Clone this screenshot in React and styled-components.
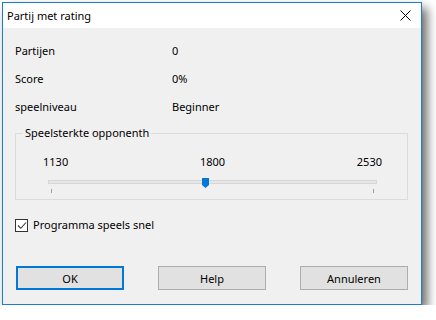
import styled, { createGlobalStyle } from 'styled-components';

const GlobalStyle = createGlobalStyle`
  html, body {
    margin: 0;
    padding: 0;
    background: #ffffff;
  }
  body {
    font-family: "Noto Sans", "Open Sans", sans-serif;
    font-size: 11px;
    color: #000000;
  }
`;

const Page = styled.div`
  padding: 2px 0 0 2px;
`;

const Window = styled.div`
  width: 418px;
  height: 301px;
  border: 1px solid #1a7fd4;
  background: #f0f0f0;
  display: flex;
  flex-direction: column;
  box-shadow: 5px 6px 10px rgba(0, 0, 0, 0.6);
`;

const TitleBar = styled.div`
  height: 25px;
  background: #ffffff;
  display: flex;
  align-items: center;
  justify-content: space-between;
  padding: 0 0 0 4px;
`;

const Title = styled.span`
  font-size: 11px;
  color: #000000;
`;

const CloseButton = styled.div`
  width: 32px;
  height: 25px;
  display: flex;
  align-items: center;
  justify-content: center;
`;

const Body = styled.div`
  flex: 1;
  padding: 8px 13px 14px 12px;
  display: flex;
  flex-direction: column;
`;

const InfoRow = styled.div`
  display: grid;
  grid-template-columns: 157px 1fr;
  height: 28px;
  align-items: center;
`;

const Group = styled.fieldset`
  margin: 5px 0 0 0;
  padding: 0 0 5px 0;
  border: 1px solid #dcdcdc;
`;

const Legend = styled.legend`
  margin-left: 7px;
  padding: 0 2px;
  line-height: 16px;
`;

const ScaleLabels = styled.div`
  display: flex;
  justify-content: space-between;
  padding: 13px 25px 0 27px;
  line-height: 16px;
`;

const SliderArea = styled.div`
  position: relative;
  margin: 10px 30px 0 32px;
  height: 14px;
`;

const Track = styled.div`
  height: 2px;
  border: 1px solid #d6d6d6;
  background: #e7e7e7;
`;

const Thumb = styled.svg`
  position: absolute;
  top: -2px;
  margin-left: -4px;
`;

const Tick = styled.div`
  position: absolute;
  top: 9px;
  width: 1px;
  height: 4px;
  background: #a0a0a0;
`;

const CheckRow = styled.label`
  display: flex;
  align-items: center;
  gap: 5px;
  margin-top: 17px;
  line-height: 16px;
`;

const CheckBox = styled.span`
  width: 11px;
  height: 11px;
  border: 1px solid #333333;
  background: #ffffff;
  display: flex;
  align-items: center;
  justify-content: center;
`;

const ButtonRow = styled.div`
  margin-top: auto;
  display: flex;
  justify-content: space-between;
  padding-left: 1px;
`;

const Button = styled.div`
  width: 108px;
  height: 24px;
  box-sizing: border-box;
  background: #e1e1e1;
  border: ${(p) => (p.$default ? '2px solid #0078d7' : '1px solid #adadad')};
  display: flex;
  align-items: center;
  justify-content: center;
`;

const min = 1130;
const max = 2530;
const value = 1800;

export default function App() {
  const pct = ((value - min) / (max - min)) * 100;
  return (
    <Page>
      <GlobalStyle />
      <Window>
        <TitleBar>
          <Title>Partij met rating</Title>
          <CloseButton>
            <svg width="11" height="11" viewBox="0 0 11 11">
              <path d="M0.5 0.5 L10.5 10.5 M10.5 0.5 L0.5 10.5" stroke="#000" strokeWidth="1" />
            </svg>
          </CloseButton>
        </TitleBar>
        <Body>
          <InfoRow>
            <span>Partijen</span>
            <span>0</span>
          </InfoRow>
          <InfoRow>
            <span>Score</span>
            <span>0%</span>
          </InfoRow>
          <InfoRow>
            <span>speelniveau</span>
            <span>Beginner</span>
          </InfoRow>
          <Group>
            <Legend>Speelsterkte opponenth</Legend>
            <ScaleLabels>
              <span>1130</span>
              <span>1800</span>
              <span>2530</span>
            </ScaleLabels>
            <SliderArea>
              <Track />
              <Tick style={{ left: '3px' }} />
              <Tick style={{ right: '3px' }} />
              <Thumb width="7" height="10" viewBox="0 0 7 10" style={{ left: `calc(3px + (100% - 6px) * ${pct / 100})` }}>
                <path d="M0 0 H7 V7 L3.5 10 L0 7 Z" fill="#0078d7" />
              </Thumb>
            </SliderArea>
          </Group>
          <CheckRow>
            <CheckBox>
              <svg width="10" height="9" viewBox="0 0 10 9">
                <path d="M1 4.5 L3.8 7.3 L9 1.5" stroke="#333" strokeWidth="1.1" fill="none" />
              </svg>
            </CheckBox>
            <span>Programma speels snel</span>
          </CheckRow>
          <ButtonRow>
            <Button $default>OK</Button>
            <Button>Help</Button>
            <Button>Annuleren</Button>
          </ButtonRow>
        </Body>
      </Window>
    </Page>
  );
}
